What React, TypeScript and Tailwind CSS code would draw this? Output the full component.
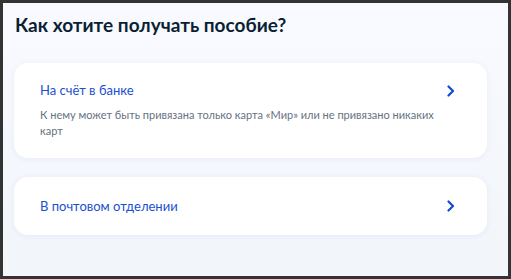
const Chevron = () => (
  <svg width="10" height="12" viewBox="0 0 10 12" fill="none" className="shrink-0">
    <path d="M2.5 1.5L7 6L2.5 10.5" stroke="#0d4cd3" strokeWidth="2.2" strokeLinecap="round" strokeLinejoin="round" />
  </svg>
);

function Option({ title, note }: { title: string; note?: string }) {
  return (
    <div className="flex items-start justify-between rounded-[14px] bg-white pl-[26px] pr-[31px] shadow-[0_1px_6px_rgba(40,70,140,0.07)]">
      <div className={note ? "pt-[18px] pb-[19px]" : "py-[20px]"}>
        <div className="text-[13px] leading-[18px] text-[#1a4fd0]">{title}</div>
        {note && (
          <p className="mt-[8px] max-w-[410px] text-[11px] leading-[16px] text-[#66727f]">{note}</p>
        )}
      </div>
      <div className={note ? "pt-[22px]" : "pt-[23px]"}>
        <Chevron />
      </div>
    </div>
  );
}

export default function App() {
  return (
    <div className="h-[279px] w-[511px] border-[3px] border-[#333333] bg-gradient-to-b from-[#f8faff] to-[#f2f5fa] font-['Lato','Noto_Sans',sans-serif]">
      <div className="pl-[11px] pr-[21px] pt-[10px]">
        <h1 className="pl-[1px] text-[19px] font-bold leading-[24px] text-[#0b1f33]">Как хотите получать пособие?</h1>
        <div className="mt-[26px] flex flex-col gap-[19px]">
          <Option
            title="На счёт в банке"
            note="К нему может быть привязана только карта «Мир» или не привязано никаких карт"
          />
          <Option title="В почтовом отделении" />
        </div>
      </div>
    </div>
  );
}
